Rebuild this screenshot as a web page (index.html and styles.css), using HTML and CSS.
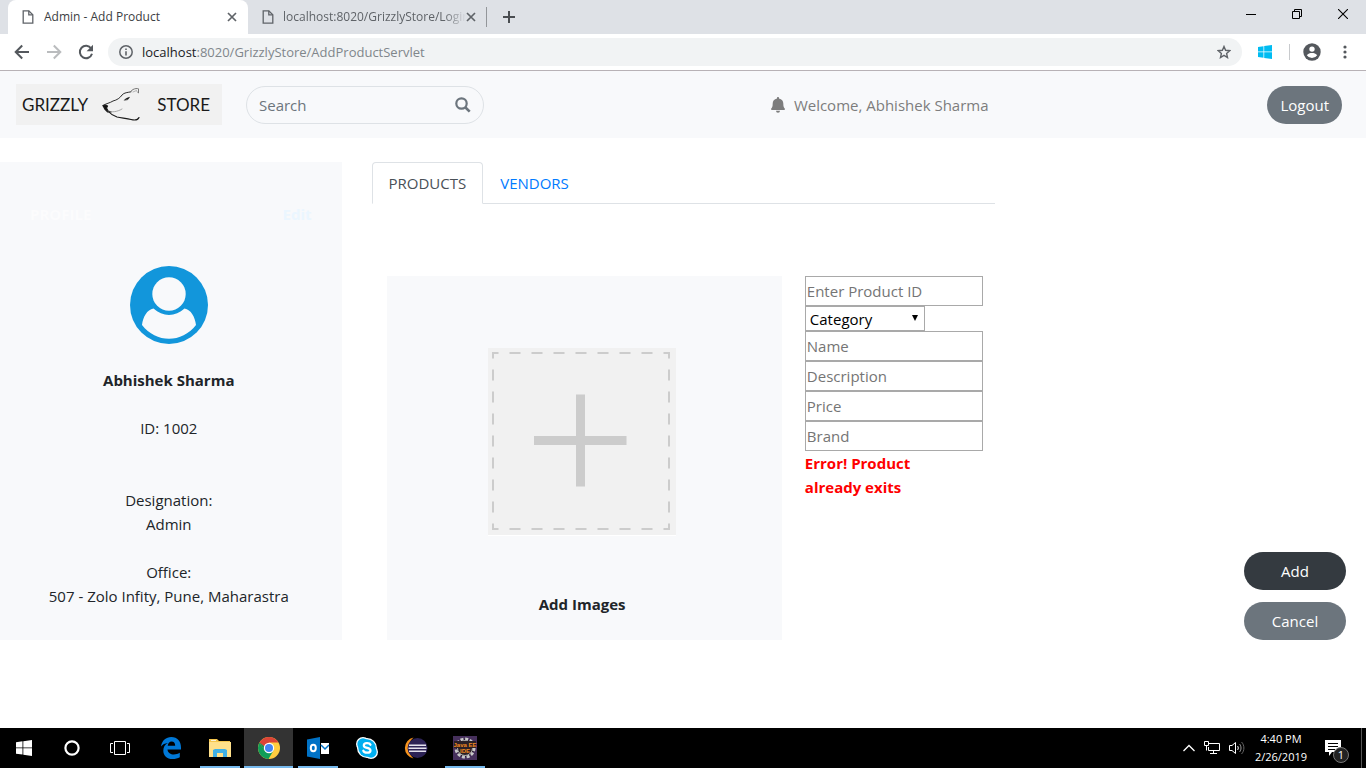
FILE: index.html
```html
<!DOCTYPE html>
<html lang="en">
<head>
<meta charset="utf-8">
<title>Admin - Add Product</title>
<link rel="stylesheet" href="styles.css">
</head>
<body>
<div class="screen">
  <div class="tabstrip">
    <div class="tab tab-active">
      <svg class="tab-icon" width="12" height="14" viewBox="0 0 12 14" fill="none" stroke="#5f6368" stroke-width="1.3"><path d="M1.2.8h5.6l4 4v8.4H1.2z"/><path d="M6.8.8v4h4"/></svg>
      <span class="tab-title">Admin - Add Product</span>
      <button class="tab-close" aria-label="Close tab"><svg width="10" height="10" viewBox="0 0 10 10" stroke="#5f6368" stroke-width="1.7"><path d="M1 1l8 8M9 1l-8 8"/></svg></button>
    </div>
    <div class="tab tab-idle">
      <svg class="tab-icon" width="12" height="14" viewBox="0 0 12 14" fill="none" stroke="#5f6368" stroke-width="1.3"><path d="M1.2.8h5.6l4 4v8.4H1.2z"/><path d="M6.8.8v4h4"/></svg>
      <span class="tab-title tab-fade">localhost:8020/GrizzlyStore/Login</span>
      <button class="tab-close" aria-label="Close tab"><svg width="10" height="10" viewBox="0 0 10 10" stroke="#5f6368" stroke-width="1.7"><path d="M1 1l8 8M9 1l-8 8"/></svg></button>
    </div>
    <button class="new-tab" aria-label="New tab"><svg width="12" height="12" viewBox="0 0 12 12" stroke="#4a4d51" stroke-width="2"><path d="M6 0v12M0 6h12"/></svg></button>
    <div class="window-buttons">
      <button aria-label="Minimize"><svg width="10" height="10" viewBox="0 0 10 10" stroke="#000"><path d="M0 5.5h10"/></svg></button>
      <button aria-label="Restore"><svg width="10" height="10" viewBox="0 0 10 10" fill="none" stroke="#000"><path d="M.5 2.5h7v7h-7zM2.500 2.500v-2h7v7h-2"/></svg></button>
      <button aria-label="Close"><svg width="10" height="10" viewBox="0 0 10 10" stroke="#000" stroke-width="1.1"><path d="M0 0l10 10M10 0L0 10"/></svg></button>
    </div>
  </div>

  <div class="toolbar">
    <button aria-label="Back"><svg width="16" height="16" viewBox="0 0 16 16" fill="none" stroke="#54585d" stroke-width="2"><path d="M15 8H2M8.200 1.500L1.700 8l6.500 6.500"/></svg></button>
    <button aria-label="Forward"><svg width="16" height="16" viewBox="0 0 16 16" fill="none" stroke="#babcbe" stroke-width="2"><path d="M1 8h13M7.800 1.500L14.300 8l-6.500 6.500"/></svg></button>
    <button aria-label="Reload"><svg width="16" height="16" viewBox="0 0 16 16"><path d="M13.200 4.500A6.200 6.200 0 1 0 14 9.800" fill="none" stroke="#54585d" stroke-width="2"/><path d="M15 .8v6.400H8.600z" fill="#54585d"/></svg></button>
    <div class="omnibox">
      <svg width="14" height="14" viewBox="0 0 14 14"><circle cx="7" cy="7" r="6.200" fill="none" stroke="#5f6368" stroke-width="1.500"/><path d="M6.200 6.200h1.600v4.300H6.200zM6.200 3.400h1.600V5H6.200z" fill="#5f6368"/></svg>
      <span class="address"><span class="host">localhost</span>:8020/GrizzlyStore/AddProductServlet</span>
      <button class="star" aria-label="Bookmark"><svg width="14" height="14" viewBox="0 0 14 14" fill="none" stroke="#5f6368" stroke-width="1.400"><path d="M7 1.500l1.600 3.800 4.100.4-3.100 2.700.9 4.100L7 10.300l-3.500 2.200.9-4.100L1.300 5.700l4.100-.4z"/></svg></button>
    </div>
    <div class="toolbar-end">
      <svg width="14" height="14" viewBox="0 0 14 14" fill="#00bcf2"><path d="M0 2l5.500-.8v5.300H0zM6.200 1.100L14 0v6.500H6.200zM0 7.300h5.500v5.400L0 12zM6.200 7.300H14V14l-7.800-1.100z"/></svg>
      <span class="divider"></span>
      <svg class="account" width="18" height="18" viewBox="0 0 18 18"><circle cx="9" cy="9" r="8.700" fill="#54585d"/><circle cx="9" cy="6.100" r="2.700" fill="#fff"/><path d="M3.800 12.200C5 10.500 7 9.900 9 9.900s4 .6 5.200 2.300A6.300 6.300 0 0 1 9 15a6.300 6.300 0 0 1-5.200-2.800z" fill="#fff"/></svg>
      <svg width="4" height="14" viewBox="0 0 4 14" fill="#54585d"><circle cx="2" cy="2" r="1.600"/><circle cx="2" cy="7" r="1.600"/><circle cx="2" cy="12" r="1.600"/></svg>
    </div>
  </div>

  <header class="navbar">
    <a class="brand" href="#" aria-label="Grizzly Store">
      <span>GRIZZLY</span>
      <svg width="38" height="34" viewBox="0 0 38 34" fill="none" stroke="#1a1a1a" stroke-linecap="round" stroke-linejoin="round"><path d="M1 17.500c3-2 7-2.500 10-4.500 4-1 7-3 9-6 2-2.500 6-2.500 9-3.200" stroke-width=".9"/><path d="M28 4l3-2.500c2-1 4-1.200 5.500-.7v4" stroke="#777" stroke-width="1"/><path d="M31 4l3.500-1.500 1 2" stroke="#999" stroke-width=".7"/><path d="M1 17.500l2.500-.5 2 1-1 2 1.500 3 3 1-3.500-.2L2.800 21z" fill="#111" stroke-width="1.200"/><path d="M6 23c4 1.500 9 1 14-2" stroke="#888" stroke-width=".7"/><path d="M7 24c2 2.500 5 4 8 5 5 1 10 1.500 14 2.500 4 1 7 .4 8-2" stroke-width="1.200"/><path d="M22.500 12c1-1.500 3-2 5-2.700l-1.500 2z" fill="#111" stroke-width=".6"/></svg>
      <span>STORE</span>
    </a>
    <form class="search">
      <input type="text" placeholder="Search" aria-label="Search">
      <button type="button" aria-label="Search"><svg width="16" height="16" viewBox="0 0 16 16" fill="none" stroke="#6c757d"><circle cx="6.500" cy="6.500" r="5.200" stroke-width="2.200"/><path d="M10.500 10.500l4.200 4.200" stroke-width="2.600"/></svg></button>
    </form>
    <div class="welcome">
      <svg width="14" height="16" viewBox="0 0 14 16" fill="#7d7d7d"><path d="M7 0c.6 0 1 .4 1 1v.6c2.800.5 4.300 2.400 4.300 4.900 0 3 .6 4.100 1.400 5 .6.700.2 1.500-.7 1.500H1c-.9 0-1.300-.8-.7-1.500.8-.9 1.400-2 1.400-5C1.700 4 3.200 2.100 6 1.600V1c0-.6.400-1 1-1zM5 13.800h4a2 2 0 0 1-4 0z"/></svg>
      <span>Welcome, Abhishek Sharma</span>
    </div>
    <button class="btn btn-gray">Logout</button>
  </header>

  <main class="content">
    <aside class="profile">
      <div class="profile-head"><span>PROFILE</span><a href="#">Edit</a></div>
      <svg class="avatar" width="78" height="78" viewBox="0 0 78 78"><circle cx="39" cy="39" r="39" fill="#1296db"/><circle cx="39" cy="28" r="16.700" fill="#f8f9fb"/><path d="M23.500 42.500C17 43.500 13 51 12 59c7 9 17 13.800 27 13.800S59 68 66 59c-1-8-5-15.500-11.500-16.500-9 8.500-22 8.500-31 0z" fill="#f8f9fb"/></svg>
      <strong>Abhishek Sharma</strong>
      <p class="employee-id">ID: 1002</p>
      <p>Designation:<br>Admin</p>
      <p class="office">Office:<br>507 - Zolo Infity, Pune, Maharastra</p>
    </aside>

    <section class="catalog">
      <nav class="tabs">
        <a class="tabs-link current" href="#">PRODUCTS</a>
        <a class="tabs-link" href="#">VENDORS</a>
      </nav>
      <div class="editor">
        <div class="image-card">
          <svg width="188" height="188" viewBox="0 0 188 188"><path fill="#fff" d="M0 187h188v1H0z"/><path fill="#f1f1f1" d="M0 0h188v187H0z"/><rect x="5" y="5" width="176" height="176" fill="none" stroke="#ccc" stroke-width="2" stroke-dasharray="11" stroke-dashoffset="5.500"/><path fill="#ccc" d="M88 46.500h9V88h41.500v9H97v41.500h-9V97H46v-9h42z"/></svg>
          <strong>Add Images</strong>
        </div>
        <form class="product-form">
          <input type="text" placeholder="Enter Product ID" aria-label="Product ID">
          <div class="select-wrap">
            <select aria-label="Category"><option>Category</option></select>
            <svg width="6" height="6" viewBox="0 0 6 6"><path d="M0 0h6L3 6z"/></svg>
          </div>
          <input type="text" placeholder="Name" aria-label="Name">
          <input type="text" placeholder="Description" aria-label="Description">
          <input type="text" placeholder="Price" aria-label="Price">
          <input type="text" placeholder="Brand" aria-label="Brand">
          <p class="error">Error! Product already exits</p>
        </form>
      </div>
    </section>

    <div class="actions">
      <button class="btn btn-dark">Add</button>
      <button class="btn btn-gray">Cancel</button>
    </div>
  </main>

  <footer class="taskbar">
    <div class="system">
      <button aria-label="Start"><svg width="16" height="16" viewBox="0 0 16 16" fill="#fff"><path d="M0 2.300L6.500 1.300v6.200H0zM7.300 1.200L16 0v7.500H7.300zM0 8.300h6.500v6.300L0 13.700zM7.300 8.300H16V16l-8.700-1.200z"/></svg></button>
      <button aria-label="Cortana"><svg width="16" height="16" viewBox="0 0 16 16" fill="none" stroke="#fff" stroke-width="2.200"><circle cx="8" cy="8" r="6.600"/></svg></button>
      <button aria-label="Task view"><svg width="20" height="14" viewBox="0 0 20 14" fill="none" stroke="#fff"><path d="M4.500.5h11v13h-11zM3 2.500H.5v9H3M17 2.500h2.500v9H17"/></svg></button>
    </div>
    <div class="apps">
      <button aria-label="Edge"><svg width="20" height="22" viewBox="0 0 20 22" fill="#0078d7"><path d="M0 9.500C1 3.500 5 0 10.300 0 16.500 0 20 4.500 20 10.500v2H6.500c.3 3.500 3.200 5 6.300 5 2.300 0 4.300-.7 6-1.700v4.400c-2 1.200-4.500 1.800-7.300 1.800C6 22 2.300 18.600 2.300 13.700c0-3.400 1.600-6.300 4.700-7.700-3.200.3-5.500 1.500-7 3.500zM6.700 8.800h7.500c0-2.800-1.400-4.300-3.600-4.300-2.200 0-3.500 1.700-3.900 4.300z"/></svg></button>
      <button class="running" aria-label="File Explorer"><svg width="22" height="18" viewBox="0 0 22 18"><path fill="#f5c64e" d="M0 0h8l2 2h11v3H0z"/><path fill="#ffe08a" d="M0 3h22v15H0z"/><path fill="#f9f3da" d="M2 1h5v1H2z"/><path fill="#3fb0e6" d="M4 18v-7l2-1h10l2 1v7h-4v-4H8v4z"/></svg></button>
      <button class="running focused" aria-label="Chrome"><svg width="22" height="22" viewBox="0 0 22 22"><circle cx="11" cy="11" r="11" fill="#ffcd40"/><path d="M11 11L1.500 5.500A11 11 0 0 1 20.500 5.500H11z" fill="#db4437"/><path d="M1.500 5.500A11 11 0 0 0 10.500 22l5-8.500L11 11 6.500 13.500z" fill="#0f9d58"/><path d="M1.500 5.500L6.300 13.500 11 5.500z" fill="#db4437"/><path d="M1.500 5.500l4.800 8.200 1.700-3z" fill="#0f9d58"/><circle cx="11" cy="11" r="5.200" fill="#fff"/><circle cx="11" cy="11" r="4" fill="#4285f4"/></svg></button>
      <button class="running" aria-label="Outlook"><svg width="22" height="22" viewBox="0 0 22 22"><path fill="#0072c6" d="M0 2.500L13 0v22L0 19.500z"/><path fill="#fff" d="M14 6h8v11h-8z"/><path d="M14 8l4 4 4-4" fill="none" stroke="#0072c6" stroke-width="1.500"/><ellipse cx="6.300" cy="11" rx="2.500" ry="3.200" fill="none" stroke="#fff" stroke-width="2"/></svg></button>
      <button aria-label="Skype"><svg width="22" height="22" viewBox="0 0 22 22"><g fill="#fff"><circle cx="7" cy="7" r="7"/><circle cx="15" cy="15" r="7"/><circle cx="11" cy="11" r="10"/></g><g fill="#00aff0"><circle cx="7" cy="7" r="5.700"/><circle cx="15" cy="15" r="5.700"/><circle cx="11" cy="11" r="8.700"/></g><path d="M14.500 7.800C13.500 5.500 7.800 5.500 7.800 8.400c0 3.300 6.700 1.700 6.700 5 0 3-6 3-7.200.3" fill="none" stroke="#fff" stroke-width="2.200" stroke-linecap="round"/></svg></button>
      <button aria-label="Eclipse"><svg width="24" height="22" viewBox="0 0 24 22"><path d="M9.500.5a10.700 10.700 0 0 0 0 21A14 14 0 0 1 9.500.5z" fill="#f7941e"/><circle cx="13.500" cy="11" r="10" fill="#2c2255"/><path d="M5 7.500h17v1.500H5zM4.500 10.500h18V12h-18zM5 13.500h17V15H5z" fill="#e4e2ee"/></svg></button>
      <button class="running" aria-label="Java EE IDE"><svg width="24" height="24" viewBox="0 0 24 24"><path fill="#46305c" d="M0 0h24v24H0z"/><circle cx="12" cy="12" r="9" fill="#281d2d" stroke="#c9c9c9" stroke-width="3" stroke-dasharray="3 1.700"/><circle cx="12" cy="12" r="7.500" fill="#2a2026" stroke="#aaa"/><path fill="#2a2026" d="M1 5h22v7H1z"/><g fill="#f28a20" font-family="Liberation Sans, sans-serif" font-weight="bold" font-size="6" text-anchor="middle"><text x="12" y="11">Java EE</text><text x="12" y="17">IDE</text></g></svg></button>
    </div>
    <div class="tray">
      <svg width="12" height="8" viewBox="0 0 12 8" fill="none" stroke="#fff" stroke-width="1.300"><path d="M.5 7L6 1.500 11.500 7"/></svg>
      <svg width="16" height="14" viewBox="0 0 16 14" fill="none" stroke="#fff"><path d="M5 2.500h10.500v7H4.500V6M.5.500h4v4h-4zM2.500 4.500v5M9.500 9.500v3M6 12.500h7"/></svg>
      <svg width="16" height="14" viewBox="0 0 16 14" fill="none" stroke="#fff"><path d="M.5 4.500H3L6.500 1.500v11L3 9.500H.5z"/><path d="M8.500 5c1 1 1 3 0 4"/><path d="M10.500 3c2 2 2 6 0 8" stroke="#999"/><path d="M12.500 1c3.200 3 3.200 9 0 12" stroke="#666"/></svg>
      <div class="clock"><span>4:40 PM</span><span>2/26/2019</span></div>
      <div class="notices">
        <svg width="16" height="16" viewBox="0 0 16 16"><path fill="#fff" d="M0 0h16v12H7l-3 4v-4H0z"/><path stroke="#000" d="M3 3.500h10M3 6.500h10M3 9.500h7"/></svg>
        <span class="badge">1</span>
      </div>
    </div>
  </footer>
</div>
</body>
</html>
```
FILE: styles.css
```css
* { box-sizing: border-box; }
body {
  margin: 0;
  background: #fff;
  color: #212529;
  font: 15px/24px "Open Sans", "Noto Sans", sans-serif;
}
button, input, select { font: inherit; margin: 0; }
button { padding: 0; border: 0; background: none; cursor: pointer; }
svg { display: block; flex: none; }
a { color: #007bff; text-decoration: none; }
p { margin: 0; }
.screen { display: flex; flex-direction: column; min-height: 100vh; }

.tabstrip {
  display: flex;
  align-items: stretch;
  height: 34px;
  padding-left: 8px;
  background: #dee1e6;
  font-size: 12px;
}
.tab { display: flex; align-items: center; width: 240px; padding: 0 11px 0 14px; }
.tab-active { background: #fff; border-radius: 8px 8px 0 0; color: #3c4043; }
.tab-idle { position: relative; width: 239px; color: #5f6368; }
.tab-idle::after { content: ""; position: absolute; right: 0; top: 7px; width: 1px; height: 20px; background: #93969a; }
.tab-title { flex: 1; min-width: 0; margin: 0 2px 0 10px; overflow: hidden; white-space: nowrap; }
.tab-idle .tab-title { margin: 0 0 0 9px; }
.tab-fade { -webkit-mask-image: linear-gradient(to right, #000 88%, transparent); mask-image: linear-gradient(to right, #000 88%, transparent); }
.tab-close { display: flex; }
.new-tab { display: flex; align-items: center; padding: 0 16px; }
.window-buttons { display: flex; margin-left: auto; height: 28px; }
.window-buttons button { display: flex; align-items: center; justify-content: center; width: 46px; }

.toolbar {
  display: flex;
  align-items: center;
  gap: 16px;
  height: 37px;
  padding: 0 19px 0 14px;
  border-bottom: 1px solid #b8b2b6;
}
.omnibox {
  display: flex;
  flex: 1;
  align-items: center;
  gap: 9px;
  height: 28px;
  margin-left: -2px;
  padding: 0 11px;
  border-radius: 14px;
  background: #f1f3f4;
  color: #80868b;
  font-size: 13px;
}
.host { color: #202124; }
.star { margin-left: auto; }
.toolbar-end { display: flex; align-items: center; }
.divider { width: 1px; height: 16px; margin: 0 13px 0 17px; background: #c8cacd; }
.account { margin-right: 22px; }

.navbar {
  display: flex;
  align-items: center;
  height: 67px;
  padding: 0 24px 0 16px;
  background: #f8f9fb;
}
.brand {
  display: grid;
  grid-template-columns: 80px 38px 1fr;
  align-items: center;
  width: 206px;
  height: 41px;
  padding: 0 12px 0 6px;
  background: #f1f1f1;
  color: #1a1a1a;
  font: 400 17px/24px Lato, sans-serif;
}
.brand span:last-child { text-align: right; }
.search {
  display: flex;
  align-items: center;
  width: 238px;
  height: 38px;
  margin-left: 24px;
  padding: 0 12px;
  border: 1px solid #dee2e6;
  border-radius: 19px;
}
.search input { flex: 1; min-width: 0; padding: 0; border: 0; outline: 0; background: none; }
.search input::placeholder { color: #6c757d; opacity: 1; }
.welcome { display: flex; align-items: center; gap: 9px; margin: 0 auto; padding-left: 8px; color: #7d7d7d; }
.btn { height: 38px; padding: 0 13px; border-radius: 19px; color: #fff; }
.btn-gray { background: #6c757d; }
.btn-dark { background: #343a40; }

.content { display: grid; grid-template-columns: 1fr 2fr 1fr; padding: 24px 0 88px; flex: 1; align-items: stretch; }
.profile {
  display: flex;
  flex-direction: column;
  align-items: center;
  padding: 40px 34px 32px 30px;
  background: #f8f9fb;
  text-align: center;
}
.profile-head { display: flex; justify-content: space-between; align-self: stretch; margin-right: -4px; font-weight: 700; color: #fcfcfd; }
.profile-head a { color: #ebf6ff; }
.avatar { margin: 40px 0 24px; }
.profile .employee-id { margin-top: 24px; margin-bottom: 48px; }
.profile .office { margin-top: 24px; }

.catalog { min-width: 0; padding: 0 30px; }
.tabs { display: flex; border-bottom: 1px solid #dee2e6; }
.tabs-link { margin-bottom: -1px; padding: 8px 16px; border: 1px solid transparent; border-radius: 4px 4px 0 0; }
.current { border-color: #dee2e6 #dee2e6 #fff; background: #fff; color: #495057; }
.editor { display: grid; grid-template-columns: 2fr 1fr; margin-top: 72px; padding: 0 15px; }
.image-card { display: flex; flex-direction: column; align-items: center; gap: 56px; padding: 72px 19px 24px 15px; background: #f8f9fb; }
.image-card svg { max-width: 100%; }
.product-form { display: flex; flex-direction: column; align-items: flex-start; min-width: 0; padding-left: 23px; }
.product-form input { width: 178px; height: 30px; padding: 1px; border: 1px solid #a9a9a9; }
.product-form input::placeholder { color: #757575; opacity: 1; }
.select-wrap { position: relative; width: 120px; }
.select-wrap select { display: block; width: 100%; height: 25px; padding: 0 4px; border: 1px solid #a9a9a9; border-radius: 0; appearance: none; background: #fff; color: #000; }
.select-wrap svg { position: absolute; right: 7px; top: 9px; pointer-events: none; }
.error { max-width: 150px; color: #f00; font-weight: 700; }
.actions { display: flex; flex-direction: column; align-items: flex-end; justify-content: flex-end; gap: 12px; padding-right: 20px; }
.actions .btn { width: 102px; }

.taskbar { display: flex; align-items: stretch; height: 40px; background: #000; color: #fff; }
.system, .apps { display: flex; }
.system { margin-right: 2px; }
.taskbar button { display: flex; align-items: center; justify-content: center; width: 48px; }
.apps button { width: 49px; }
.running { background: linear-gradient(#76b9ed, #76b9ed) center bottom / 40px 2px no-repeat; }
.apps .focused { background: linear-gradient(#76b9ed, #76b9ed) center bottom / 49px 2px no-repeat #333; }
.tray { display: flex; align-items: center; gap: 9px; margin-left: auto; padding-right: 4px; border-right: 1px solid #555; margin-right: 4px; }
.clock { display: flex; flex-direction: column; align-items: center; width: 54px; font-size: 11px; line-height: 18px; }
.notices { position: relative; margin: 0 16px 0 8px; }
.badge {
  position: absolute;
  left: 8px;
  top: 7px;
  width: 16px;
  height: 16px;
  border: 1px solid #777;
  border-radius: 50%;
  background: #222;
  font-size: 11px;
  line-height: 14px;
  text-align: center;
}
```
